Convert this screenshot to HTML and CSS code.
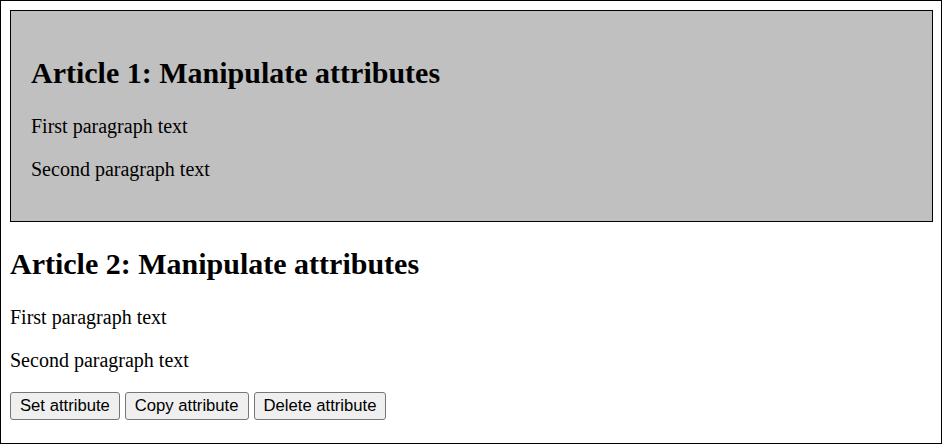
FILE: index.html
```html
<!DOCTYPE html>
<html lang="en">
<head>
<meta charset="utf-8">
<title>Manipulate attributes</title>
<link rel="stylesheet" href="styles.css">
</head>
<body>
<div class="page">
  <article class="article article-boxed">
    <h1 class="title">Article 1: Manipulate attributes</h1>
    <p class="text">First paragraph text</p>
    <p class="text">Second paragraph text</p>
  </article>
  <article class="article">
    <h2 class="title">Article 2: Manipulate attributes</h2>
    <p class="text">First paragraph text</p>
    <p class="text">Second paragraph text</p>
  </article>
  <div class="actions">
    <button class="btn" type="button">Set attribute</button>
    <button class="btn" type="button">Copy attribute</button>
    <button class="btn" type="button">Delete attribute</button>
  </div>
</div>
</body>
</html>
```

FILE: styles.css
```css
html, body {
  margin: 0;
  padding: 0;
  background: #fff;
}

body {
  font-family: "Liberation Serif", "Times New Roman", serif;
  color: #000;
}

.page {
  box-sizing: border-box;
  width: 942px;
  height: 444px;
  border: 1px solid #000;
  padding: 9px 8px 9px 9px;
  overflow: hidden;
}

.article {
  display: block;
}

.article-boxed {
  background: #c0c0c0;
  border: 1px solid #000;
  padding: 20px;
}

.title {
  font-size: 30px;
  font-weight: bold;
  line-height: 34px;
  margin: 25px 0;
}

.text {
  font-size: 20px;
  line-height: 23px;
  margin: 20px 0;
}

.actions {
  display: flex;
  gap: 5px;
}

.btn {
  font-family: "Liberation Sans", Arial, sans-serif;
  font-size: 16.67px;
  line-height: 19px;
  color: #000;
  background: #efefef;
  border: 1px solid #767676;
  border-radius: 3px;
  padding: 3px 9px 4px;
  margin: 0;
}
```
